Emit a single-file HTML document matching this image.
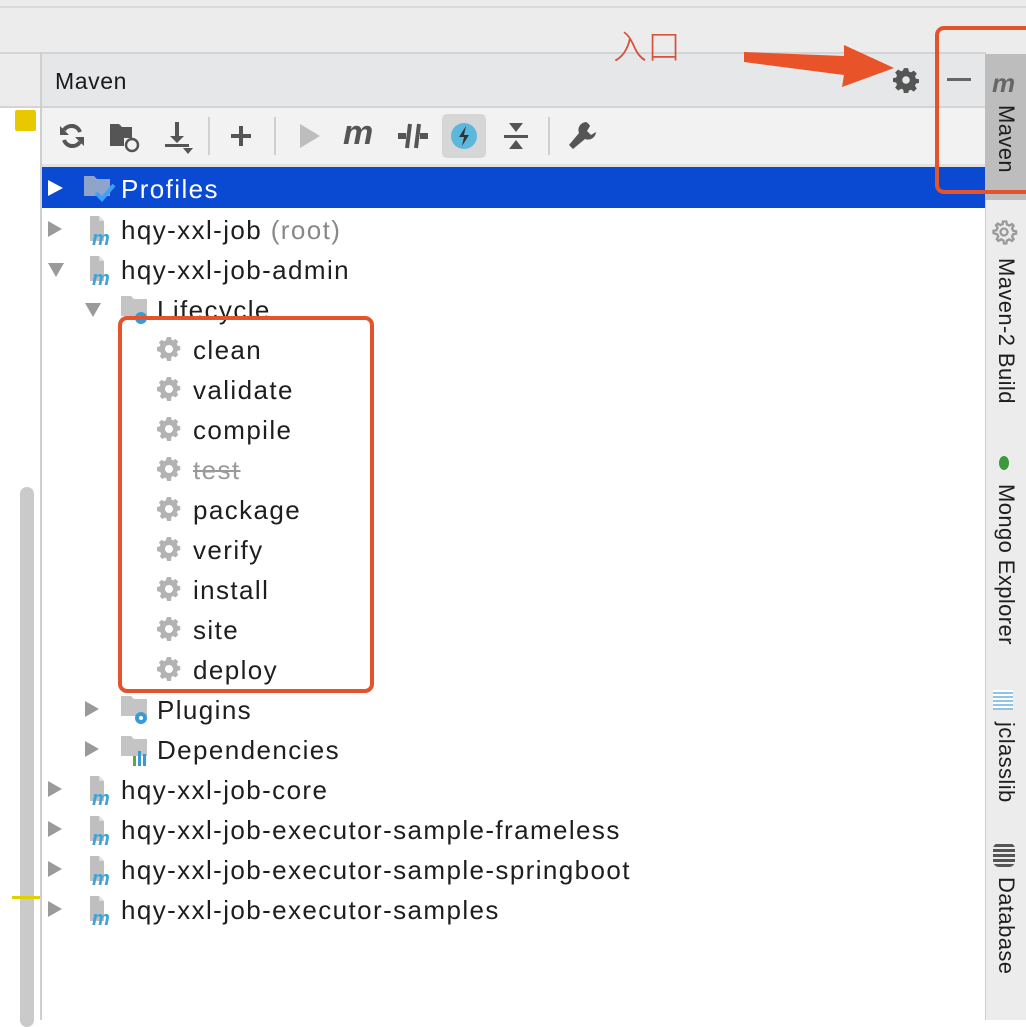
<!DOCTYPE html>
<html><head><meta charset="utf-8"><style>
*{margin:0;padding:0;box-sizing:border-box}
body{width:1026px;height:1020px;position:relative;overflow:hidden;background:#fff;font-family:"Liberation Sans","Noto Sans CJK SC",sans-serif;color:#1e1e1e}
.a{position:absolute}
.row{position:absolute;height:40px;line-height:40px;font-size:26px;letter-spacing:1.4px;white-space:nowrap}
.tri{position:absolute;width:0;height:0}
.tr{border-top:8px solid transparent;border-bottom:8px solid transparent;border-left:14px solid #9a9a9a}
.td{border-left:8px solid transparent;border-right:8px solid transparent;border-top:14px solid #9a9a9a}
.v{position:absolute;transform:rotate(90deg);transform-origin:0 0;font-size:22px;letter-spacing:0.4px;white-space:nowrap}
</style></head><body>
<div class="a" style="left:0;top:0;width:1026px;height:106px;background:#ececec"></div>
<div class="a" style="left:0;top:6px;width:1026px;height:2px;background:#dadada"></div>
<div class="a" style="left:0;top:52px;width:985px;height:2px;background:#d4d4d4"></div>
<div class="a" style="left:42px;top:54px;width:943px;height:52px;background:#e5e7e9"></div>
<div class="a" style="left:55px;top:68px;font-size:23px;letter-spacing:0.6px;color:#1a1a1a">Maven</div>
<div class="a" style="left:0;top:106px;width:985px;height:2px;background:#d4d4d4"></div>
<div class="a" style="left:42px;top:108px;width:943px;height:56px;background:#f2f2f2"></div>
<div class="a" style="left:42px;top:164px;width:943px;height:3px;background:#e2e2e2"></div>
<div class="a" style="left:40px;top:52px;width:2px;height:968px;background:#cfcfcf"></div>
<div class="a" style="left:15px;top:110px;width:21px;height:21px;background:#e8c800;border-radius:2px"></div>
<div class="a" style="left:20px;top:487px;width:14px;height:540px;background:#cacaca;border-radius:7px"></div>
<div class="a" style="left:12px;top:896px;width:28px;height:3px;background:#e0d000"></div>
<div class="a" style="left:985px;top:52px;width:41px;height:968px;background:#ececec;border-left:1px solid #cfcfcf"></div>
<div class="a" style="left:985px;top:54px;width:41px;height:146px;background:#bdbdbd"></div>
<div class="a" style="left:992px;top:68px;font-size:26px;font-weight:bold;font-style:italic;color:#666">m</div>
<div class="v" style="left:1019px;top:105px">Maven</div>
<svg class="a" style="left:990px;top:218px" width="28" height="28" viewBox="0 0 24 24"><path fill="none" stroke="#9a9a9a" stroke-width="2" d="M12 3l2 0 .5 2.5 2 1 2.3-1.3 1.4 1.4-1.3 2.3 1 2 2.5.5v2l-2.5.5-1 2 1.3 2.3-1.4 1.4-2.3-1.3-2 1-.5 2.5h-2l-.5-2.5-2-1-2.3 1.3-1.4-1.4 1.3-2.3-1-2L3 13v-2l2.5-.5 1-2-1.3-2.3 1.4-1.4 2.3 1.3 2-1L11 3z"/><circle cx="12" cy="12" r="3" fill="none" stroke="#9a9a9a" stroke-width="2"/></svg>
<div class="v" style="left:1019px;top:258px">Maven-2 Build</div>
<div class="a" style="left:999px;top:456px;width:10px;height:14px;border-radius:50%;background:#3c9a3c"></div>
<div class="v" style="left:1019px;top:484px">Mongo Explorer</div>
<div class="a" style="left:993px;top:690px;width:20px;height:20px;background:repeating-linear-gradient(0deg,#8fc3e8 0 2px,#fff 2px 4px)"></div>
<div class="v" style="left:1019px;top:722px">jclasslib</div>
<div class="a" style="left:993px;top:843px;width:22px;height:24px;background:repeating-linear-gradient(0deg,#555 0 3px,#ececec 3px 5px);border-radius:6px"></div>
<div class="v" style="left:1019px;top:877px">Database</div>
<svg class="a" style="left:893px;top:67px" width="26" height="26" viewBox="0 0 24 24"><path fill="#555" d="M10 1h4l.6 3 2 1 2.6-1.7 2.8 2.8L20.3 8.7l.8 2L24 11.3v3.4l-2.9.6-.8 2 1.7 2.6-2.8 2.8-2.6-1.7-2 .8L14 24h-4l-.6-3.1-2-.8-2.6 1.7L2 19l1.7-2.6-.8-2L0 13.7v-3.4l2.9-.6.8-2L2 5.1 4.8 2.3l2.6 1.7 2-1z"/><circle cx="12" cy="12" r="3.5" fill="#e5e7e9"/></svg>
<div class="a" style="left:947px;top:78px;width:24px;height:3px;background:#666"></div>
<svg class="a" style="left:56px;top:121px" width="32" height="30" viewBox="0 0 32 30"><path fill="none" stroke="#555" stroke-width="4" d="M24 11a9 9 0 0 0-16-2M8 19a9 9 0 0 0 16 2"/><path fill="#555" d="M4 5v9h9zM28 25v-9h-9z"/></svg>
<svg class="a" style="left:108px;top:120px" width="36" height="34" viewBox="0 0 36 34"><path fill="#555" d="M2 4h9l3 3h10v11h-8v8H2z"/><circle cx="24" cy="25" r="6" fill="none" stroke="#555" stroke-width="2.5"/></svg>
<svg class="a" style="left:161px;top:120px" width="36" height="36" viewBox="0 0 36 36"><path fill="#555" d="M14 2h4v14h5l-7 7-7-7h5zM4 24h24v3H4zM22 28h10l-5 6z"/></svg>
<div class="a" style="left:208px;top:117px;width:2px;height:38px;background:#d0d0d0"></div>
<div class="a" style="left:231px;top:134px;width:20px;height:4px;background:#555"></div>
<div class="a" style="left:239px;top:126px;width:4px;height:20px;background:#555"></div>
<div class="a" style="left:274px;top:117px;width:2px;height:38px;background:#d0d0d0"></div>
<div class="tri" style="left:300px;top:124px;border-top:12px solid transparent;border-bottom:12px solid transparent;border-left:20px solid #bdbdbd"></div>
<div class="a" style="left:343px;top:114px;font-size:34px;font-weight:bold;font-style:italic;color:#555">m</div>
<svg class="a" style="left:396px;top:120px" width="34" height="32" viewBox="0 0 34 32"><path fill="#555" d="M2 13h8v6H2zM24 13h8v6h-8z"/><path stroke="#555" stroke-width="4" d="M14 4l-3 24M23 4l-3 24"/></svg>
<div class="a" style="left:442px;top:114px;width:44px;height:44px;background:#d6d6d6;border-radius:5px"></div>
<svg class="a" style="left:450px;top:122px" width="28" height="28" viewBox="0 0 28 28"><circle cx="14" cy="14" r="13" fill="#5cb7dd"/><path fill="#333" d="M16 4l-7 11h5l-2 9 7-11h-5z"/></svg>
<svg class="a" style="left:502px;top:121px" width="28" height="30" viewBox="0 0 28 30"><path fill="#555" d="M7 2h14l-7 9zM2 14h24v3H2zM14 19l7 9H7z"/></svg>
<div class="a" style="left:548px;top:117px;width:2px;height:38px;background:#d0d0d0"></div>
<svg class="a" style="left:566px;top:120px" width="32" height="32" viewBox="0 0 32 32"><path fill="#555" d="M20 2a8 8 0 0 0-7 11L3 25l4 4 12-10a8 8 0 0 0 11-7l-5 3-4-4 3-5a8 8 0 0 0-4-4z"/></svg>
<div class="a" style="left:42px;top:167px;width:943px;height:41px;background:#0a49d2"></div>
<div class="tri" style="left:48px;top:180px;border-top:8px solid transparent;border-bottom:8px solid transparent;border-left:15px solid #fff"></div>
<svg class="a" style="left:82px;top:174px" width="36" height="30" viewBox="0 0 36 30"><path fill="#8fa4c8" d="M2 2h10l3 3h13v17H2z"/><path fill="none" stroke="#3da0ff" stroke-width="4" d="M14 19l6 6 12-14"/></svg>
<div class="row" style="left:121px;top:169px;color:#fff">Profiles</div>

<div class="tri tr" style="left:48px;top:221px"></div>
<svg class="a" style="left:86px;top:214px" width="30" height="32" viewBox="0 0 30 32"><path fill="#bfbfbf" d="M4 2h9l5 5v20H4z"/><path fill="#ddd" d="M13 2v5h5z"/><text x="6" y="31" font-family="Liberation Sans" font-style="italic" font-weight="bold" font-size="20" fill="#3fa3d4">m</text></svg>
<div class="row" style="left:121px;top:210px">hqy-xxl-job <span style="color:#888">(root)</span></div>
<div class="tri td" style="left:48px;top:263px"></div>
<svg class="a" style="left:86px;top:254px" width="30" height="32" viewBox="0 0 30 32"><path fill="#bfbfbf" d="M4 2h9l5 5v20H4z"/><path fill="#ddd" d="M13 2v5h5z"/><text x="6" y="31" font-family="Liberation Sans" font-style="italic" font-weight="bold" font-size="20" fill="#3fa3d4">m</text></svg>
<div class="row" style="left:121px;top:250px">hqy-xxl-job-admin</div>
<div class="tri td" style="left:85px;top:303px"></div>
<svg class="a" style="left:119px;top:294px" width="36" height="34" viewBox="0 0 36 34"><path fill="#c4c4c4" d="M2 2h10l3 3h13v17H2z"/><circle cx="22" cy="24" r="6" fill="#3a9ad8"/></svg>
<div class="row" style="left:157px;top:290px">Lifecycle</div>
<div class="row" style="left:193px;top:330px">clean</div>
<div class="row" style="left:193px;top:370px">validate</div>
<div class="row" style="left:193px;top:410px">compile</div>
<div class="row" style="left:193px;top:450px;color:#9a9a9a;text-decoration:line-through">test</div>
<div class="row" style="left:193px;top:490px">package</div>
<div class="row" style="left:193px;top:530px">verify</div>
<div class="row" style="left:193px;top:570px">install</div>
<div class="row" style="left:193px;top:610px">site</div>
<div class="row" style="left:193px;top:650px">deploy</div>
<svg class="a" style="left:156px;top:336px" width="28" height="350" viewBox="0 0 28 350">
<defs><g id="g"><path fill="#b3b3b3" d="M11 1h4l.5 2.6 1.8.8 2.2-1.5 2.8 2.8-1.5 2.2.8 1.8 2.6.5v4l-2.6.5-.8 1.8 1.5 2.2-2.8 2.8-2.2-1.5-1.8.8L15 25h-4l-.5-2.6-1.8-.8-2.2 1.5-2.8-2.8 1.5-2.2-.8-1.8L1 15v-4l2.6-.5.8-1.8-1.5-2.2 2.8-2.8 2.2 1.5 1.8-.8z"/><circle cx="13" cy="13" r="4" fill="#fff"/></g></defs>
<use href="#g" y="0"/><use href="#g" y="40"/><use href="#g" y="80"/><use href="#g" y="120"/><use href="#g" y="160"/><use href="#g" y="200"/><use href="#g" y="240"/><use href="#g" y="280"/><use href="#g" y="320"/>
</svg>
<div class="tri tr" style="left:85px;top:701px"></div>
<svg class="a" style="left:119px;top:694px" width="36" height="34" viewBox="0 0 36 34"><path fill="#c4c4c4" d="M2 2h10l3 3h13v17H2z"/><circle cx="22" cy="24" r="6" fill="#3a9ad8"/><circle cx="22" cy="24" r="2" fill="#fff"/></svg>
<div class="row" style="left:157px;top:690px">Plugins</div>
<div class="tri tr" style="left:85px;top:741px"></div>
<svg class="a" style="left:119px;top:734px" width="36" height="34" viewBox="0 0 36 34"><path fill="#c4c4c4" d="M2 2h10l3 3h13v17H2z"/><rect x="14" y="22" width="3" height="10" fill="#5aab3a"/><rect x="19" y="17" width="3" height="15" fill="#3a9ad8"/><rect x="24" y="20" width="3" height="12" fill="#3a9ad8"/></svg>
<div class="row" style="left:157px;top:730px">Dependencies</div>
<div class="tri tr" style="left:48px;top:781px"></div>
<svg class="a" style="left:86px;top:774px" width="30" height="32" viewBox="0 0 30 32"><path fill="#bfbfbf" d="M4 2h9l5 5v20H4z"/><path fill="#ddd" d="M13 2v5h5z"/><text x="6" y="31" font-family="Liberation Sans" font-style="italic" font-weight="bold" font-size="20" fill="#3fa3d4">m</text></svg>
<div class="row" style="left:121px;top:770px">hqy-xxl-job-core</div>
<div class="tri tr" style="left:48px;top:821px"></div>
<svg class="a" style="left:86px;top:814px" width="30" height="32" viewBox="0 0 30 32"><path fill="#bfbfbf" d="M4 2h9l5 5v20H4z"/><path fill="#ddd" d="M13 2v5h5z"/><text x="6" y="31" font-family="Liberation Sans" font-style="italic" font-weight="bold" font-size="20" fill="#3fa3d4">m</text></svg>
<div class="row" style="left:121px;top:810px">hqy-xxl-job-executor-sample-frameless</div>
<div class="tri tr" style="left:48px;top:861px"></div>
<svg class="a" style="left:86px;top:854px" width="30" height="32" viewBox="0 0 30 32"><path fill="#bfbfbf" d="M4 2h9l5 5v20H4z"/><path fill="#ddd" d="M13 2v5h5z"/><text x="6" y="31" font-family="Liberation Sans" font-style="italic" font-weight="bold" font-size="20" fill="#3fa3d4">m</text></svg>
<div class="row" style="left:121px;top:850px">hqy-xxl-job-executor-sample-springboot</div>
<div class="tri tr" style="left:48px;top:901px"></div>
<svg class="a" style="left:86px;top:894px" width="30" height="32" viewBox="0 0 30 32"><path fill="#bfbfbf" d="M4 2h9l5 5v20H4z"/><path fill="#ddd" d="M13 2v5h5z"/><text x="6" y="31" font-family="Liberation Sans" font-style="italic" font-weight="bold" font-size="20" fill="#3fa3d4">m</text></svg>
<div class="row" style="left:121px;top:890px">hqy-xxl-job-executor-samples</div>

<div class="a" style="left:118px;top:316px;width:256px;height:377px;border:4px solid #e4542c;border-radius:9px"></div>
<div class="a" style="left:935px;top:26px;width:100px;height:168px;border:4px solid #e4542c;border-radius:9px"></div>
<div class="a" style="left:613px;top:20px;font-size:34px;color:#d5543a;font-family:'Noto Sans CJK SC',sans-serif;font-weight:300">入口</div>
<svg class="a" style="left:740px;top:38px" width="156" height="50" viewBox="0 0 156 50"><path fill="#e9532a" d="M4 14l100 4 0-11 50 23-52 19 2-12L4 24z"/></svg>
</body></html>
